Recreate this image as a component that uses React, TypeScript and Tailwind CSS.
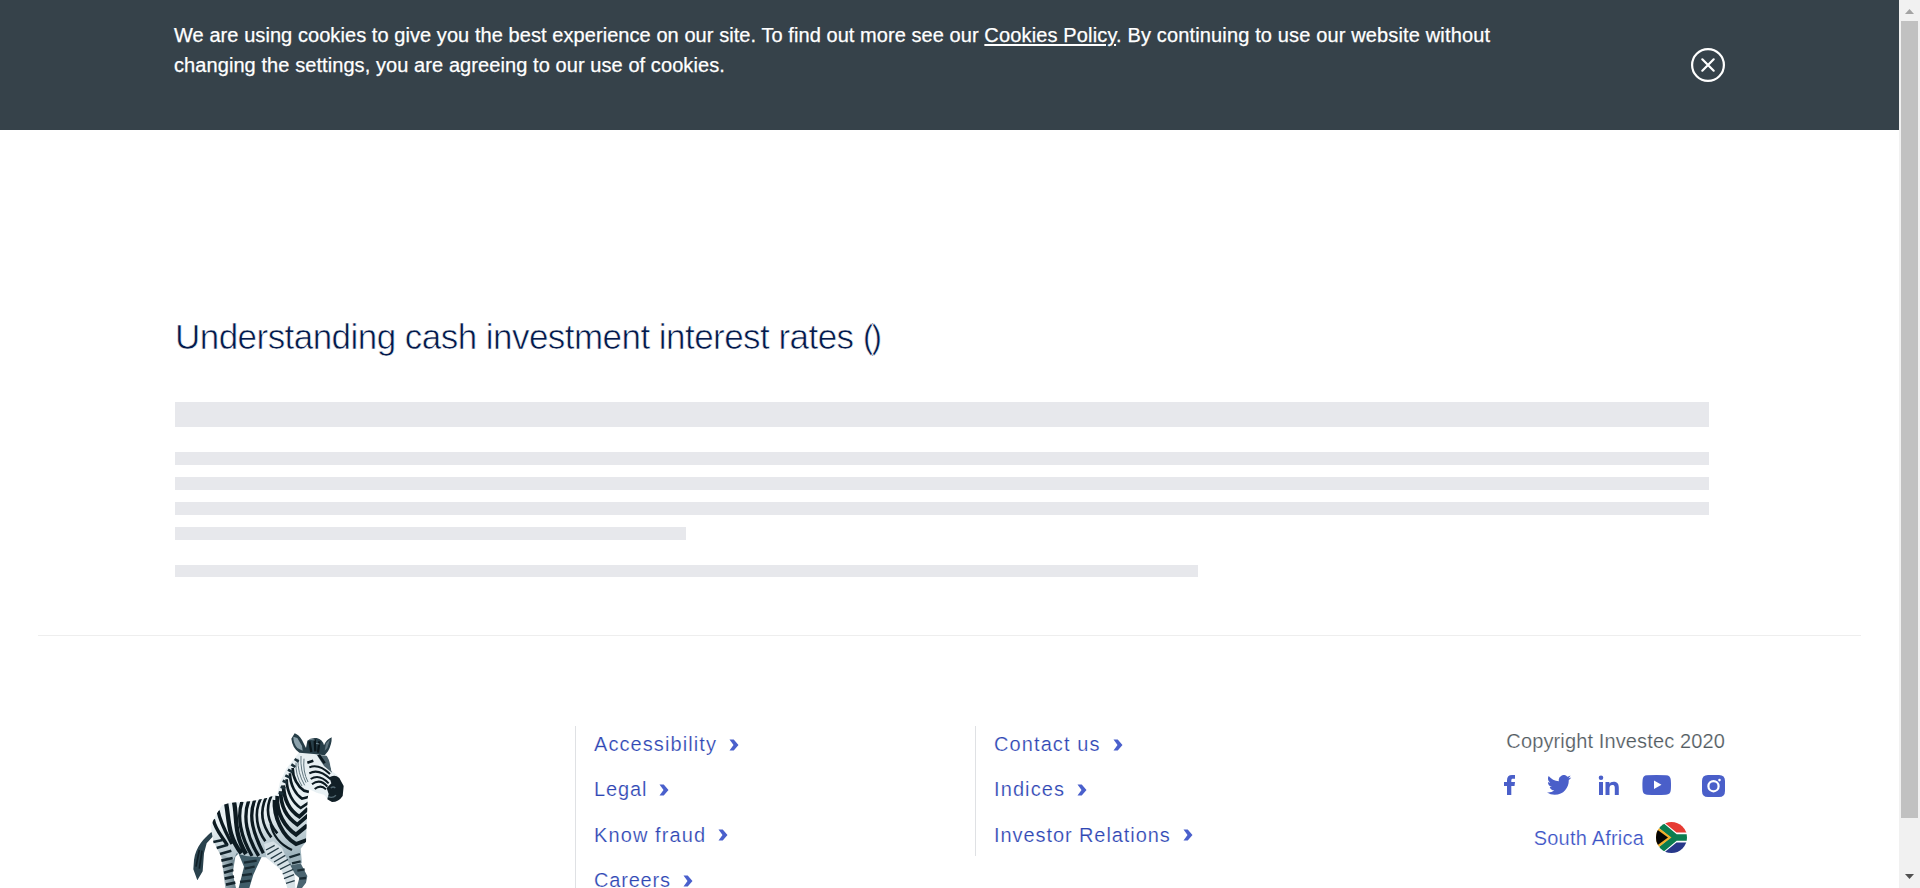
import React from "react";

function Chevron() {
  return (
    <svg className="ml-3 mt-px block h-3 w-[10px] shrink-0" viewBox="0 0 10 12" fill="#4a60cc">
      <path d="M.5.500h4.200L9.500 6 4.700 11.500H.5L4.500 6z" />
    </svg>
  );
}

function FooterLink({ label, spacing }: { label: string; spacing: string }) {
  return (
    <li className="flex h-[45.4px] items-start">
      <a className="flex items-center leading-[30px]">
        <span className={spacing}>{label}</span>
        <Chevron />
      </a>
    </li>
  );
}

const torso =
  "M385 100L408 93 465 98 480 125 484 152 502 166 520 196 519 226 500 244 478 243 462 224 440 218 418 208 413 235 411 290 408 365 392 386 396 430 340 440 288 412 262 411 228 408 200 400 190 420 150 400 128 345 122 318 136 288 156 256 180 248 240 244 290 234 322 223 330 185 350 145z";

function Zebra() {
  return (
    <svg className="block h-[168px] w-[200px]" viewBox="0 0 600 504">
      <defs>
        <linearGradient id="coat" x1="0" y1="0" x2="0.3" y2="1">
          <stop offset="0" stopColor="#e6eef1" />
          <stop offset="0.6" stopColor="#e9f1f4" />
          <stop offset="1" stopColor="#9fb4bd" />
        </linearGradient>
        <linearGradient id="leg" x1="0" y1="0" x2="1" y2="0">
          <stop offset="0" stopColor="#e2ebee" />
          <stop offset="1" stopColor="#4c6874" />
        </linearGradient>
        <clipPath id="body">
          <path d={torso} />
        </clipPath>
      </defs>
      <path d="M124 336C102 356 78 378 72 420L70 448 82 481 98 454 102 400 110 370 132 346z" fill="#2a424d" />
      <path d="M88 390L78 440M96 392L88 446" stroke="#0f1f27" strokeWidth="5" />
      <path d="M206 402L222 440 206 504H238L250 464 276 408z" fill="#405c68" />
      <path d="M340 400L390 380 392 430 412 468 408 488 396 504H380L388 474 350 440z" fill="#4b6571" />
      <path d="M124 330L130 364 154 410 166 504H198L188 460 196 410 210 396 180 340z" fill="url(#leg)" />
      <path d={torso} fill="url(#coat)" />
      <path d="M282 372L290 414 336 452 352 504H376L374 460 352 420 336 384 310 364z" fill="#d6e1e6" />
      <g clipPath="url(#body)" fill="none" stroke="#0c1a21">
        <path d="M168 248C178 300 172 346 214 400M192 246C202 290 190 340 228 402" strokeWidth="13" />
        <path d="M216 244C200 290 212 350 246 408M236 242C218 290 230 350 266 408M254 240C234 290 250 340 280 400" strokeWidth="10" />
        <path d="M272 236C250 280 262 330 286 364M288 232C268 276 276 316 304 352M304 228C286 264 292 306 322 340" strokeWidth="8" />
        <path d="M144 272C152 312 168 338 186 372M130 298C136 330 156 348 172 376" strokeWidth="10" />
        <path d="M314 240C310 290 338 350 378 372L410 360M322 228C318 280 346 322 378 344L412 316" strokeWidth="12" />
        <path d="M332 214C332 260 352 294 382 314L414 286M340 196C342 240 360 272 388 290L414 266" strokeWidth="11" />
        <path d="M350 178C350 218 370 250 392 264L416 248M360 160C360 196 378 224 396 236L418 230M368 144C368 174 384 200 402 212L418 216" strokeWidth="8" />
        <path d="M302 312C308 344 330 374 366 390" strokeWidth="7" />
        <path d="M384 116Q382 158 404 196M393 108Q390 152 408 188M402 116Q398 155 414 186M378 128Q376 166 396 198" strokeWidth="3" stroke="#60767f" />
        <path d="M440 104L474 108 486 158 462 138z" fill="#4b616b" stroke="none" />
        <path d="M418 142Q446 130 480 162M418 160Q446 144 482 178M422 177Q448 160 476 190M426 193Q450 174 472 200M434 207Q452 192 468 208" strokeWidth="6" />
        <path d="M412 128L430 122M446 104L464 130" strokeWidth="8" />
      </g>
      <path d="M326 218l14 4M332 200l14 5M338 182l14 6M346 166l14 7M354 149l14 8M364 133l12 8M374 117l12 8" stroke="#1a2e37" strokeWidth="8" />
      <path d="M388 98Q367 84 364 56L374 40Q386 44 396 60L408 84 412 62Q422 52 440 54 458 58 462 76 468 60 485 52 486 72 474 94L464 106 432 102z" fill="#273e48" />
      <path d="M370 50L382 54 396 78 398 92 382 84Q370 70 370 50z" fill="#8ca2ac" />
      <path d="M480 58L472 84 464 92 468 70z" fill="#60757f" />
      <path d="M418 64l6 32M434 58l2 36M448 64l-4 34" stroke="#0a151a" strokeWidth="7" />
      <path d="M420 58l14 2M438 70l10 2" stroke="#6f8690" strokeWidth="3" />
      <path d="M478 172Q494 162 508 174L521 198 518 228Q506 246 486 246L472 238 476 222 470 204 484 190z" fill="#111f26" />
      <path d="M474 230q14 6 24-4M482 204q8-6 14 0" stroke="#526872" strokeWidth="4" fill="none" />
      <path d="M130 366l28-6M140 384l34-10M150 402l34-10M154 422l34-8M158 440l30-8M162 458l28-8M164 476l28-6M168 494l28-6" stroke="#13242c" strokeWidth="8" />
      <path d="M288 390l26-14M292 404l34-20M302 416l34-20M312 426l34-20M322 436l32-18M330 448l32-16M338 462l32-14M342 476l30-12M348 490l26-8" stroke="#253b45" strokeWidth="4" />
      <path d="M222 428l38-6M224 446l30-6M216 466l30-4M210 486l32-4M358 412l32-10M366 430l26-6M382 452l22-4M388 476l20-2" stroke="#182a32" strokeWidth="7" />
    </svg>
  );
}

function Flag() {
  return (
    <svg className="block size-[31px]" viewBox="0 0 31 31">
      <defs>
        <clipPath id="disc">
          <circle cx="15.5" cy="15.5" r="15.5" />
        </clipPath>
      </defs>
      <g clipPath="url(#disc)">
        <path d="M0 0h31v31H0z" fill="#fff" />
        <path d="M8 0h23v10.500H20.500L10 2z" fill="#e63b33" />
        <path d="M8 31h23V20.500H20.500L10 29z" fill="#27388a" />
        <path d="M1 0L19.500 15.500H31M1 31L19.500 15.500" stroke="#0b7d50" strokeWidth="6.500" fill="none" />
        <path d="M-1 3L15.500 15.500-1 28z" fill="#f2ae2c" />
        <path d="M-1 6L12 15.500-1 25z" fill="#050505" />
      </g>
    </svg>
  );
}

function Bar({ className }: { className: string }) {
  return <div className={"bg-[#e7e8ec] " + className} />;
}

export default function App() {
  return (
    <div className="flex h-[888px] w-full overflow-hidden bg-white font-['Liberation_Sans',Arial,sans-serif]">
      <div className="flex min-w-0 flex-1 flex-col overflow-hidden">
        <header className="flex h-[130px] shrink-0 justify-between bg-[#36424a] px-[174px] text-white">
          <p className="whitespace-nowrap pt-[20px] text-[20px] leading-[30px] [-webkit-text-stroke:0.25px_white]">
            <span className="tracking-[0.068px]">
              We are using cookies to give you the best experience on our site. To find out more see our{" "}
            </span>
            <span className="tracking-[0.145px]">
              <a className="underline decoration-2 underline-offset-2">Cookies Policy</a>. By continuing to use our
              website without
            </span>
            <br />
            <span className="tracking-[0.08px]">
              changing the settings, you are agreeing to our use of cookies.
            </span>
          </p>
          <button className="mt-12 size-[34px]" aria-label="Close">
            <svg viewBox="0 0 34 34" fill="none" stroke="#fff" strokeWidth="2.2" strokeLinecap="round">
              <circle cx="17" cy="17" r="15.9" />
              <path d="M11.3 11.3l11.4 11.4M22.7 11.3L11.3 22.7" />
            </svg>
          </button>
        </header>

        <main className="flex h-[505px] shrink-0 flex-col pl-[175px] pt-[182px]">
          <h1 className="mb-[40px] h-[50px] whitespace-nowrap text-[35px] leading-[49px] tracking-[-0.54px] text-[#03194b] [-webkit-text-stroke:0.6px_white]">
            Understanding cash investment interest rates <span className="tracking-[-4px]">()</span>
          </h1>
          <Bar className="h-[25px] w-[1534px]" />
          <Bar className="mt-[25px] h-[13px] w-[1534px]" />
          <Bar className="mt-[12px] h-[13px] w-[1534px]" />
          <Bar className="mt-[12px] h-[13px] w-[1534px]" />
          <Bar className="mt-[12px] h-[13px] w-[511px]" />
          <Bar className="mt-[25px] h-[12px] w-[1023px]" />
        </main>

        <footer className="mx-[38px] flex h-[253px] shrink-0 overflow-hidden border-t border-[#eeeeee] text-[20px] text-[#2f47b4]">
          <div className="w-[537px] shrink-0 pl-[132px] pt-[84px]">
            <Zebra />
          </div>
          <ul className="mt-[90px] w-[400px] shrink-0 border-l border-[#dfe1e4] pl-[18px] pt-[3px] [-webkit-text-stroke:0.2px_white]">
            <FooterLink label="Accessibility" spacing="tracking-[1.08px]" />
            <FooterLink label="Legal" spacing="tracking-[0.9px]" />
            <FooterLink label="Know fraud" spacing="tracking-[1.1px]" />
            <FooterLink label="Careers" spacing="tracking-[0.8px]" />
          </ul>
          <ul className="mt-[90px] h-[130px] w-[400px] shrink-0 border-l border-[#dfe1e4] pl-[18px] pt-[3px] [-webkit-text-stroke:0.2px_white]">
            <FooterLink label="Contact us" spacing="tracking-[1.1px]" />
            <FooterLink label="Indices" spacing="tracking-[1.1px]" />
            <FooterLink label="Investor Relations" spacing="tracking-[0.92px]" />
          </ul>
          <div className="flex min-w-0 flex-1 flex-col items-end pr-[136px] pt-[90px]">
            <p className="whitespace-nowrap leading-[30px] tracking-[0.13px] text-[#535c62] [-webkit-text-stroke:0.2px_white]">
              Copyright Investec 2020
            </p>
            <svg className="mt-[19px] block h-[22px] w-[222px]" viewBox="0 0 222 22" fill="#4a5fc9">
              <path d="M4 20V11H1V7h3V5.200C4 1.800 5.800 0 9 0h3v3.800H10C8.700 3.800 8.300 4.400 8.300 5.500V7H12l-.5 4H8.300v9z" />
              <path
                transform="translate(44 -2.200) scale(1.010)"
                d="M23.950 4.570a10 10 0 0 1-2.820.78 4.960 4.960 0 0 0 2.160-2.730c-.95.560-2 .960-3.130 1.190a4.920 4.920 0 0 0-8.380 4.480C7.690 8.100 4.070 6.130 1.640 3.160a4.820 4.820 0 0 0-.67 2.480c0 1.710.87 3.210 2.190 4.100a4.900 4.900 0 0 1-2.230-.62v.06a4.920 4.920 0 0 0 3.950 4.830 5 5 0 0 1-2.210.08 4.940 4.940 0 0 0 4.600 3.420A9.870 9.870 0 0 1 0 19.540a14 14 0 0 0 7.550 2.210c9.050 0 14-7.500 14-13.990 0-.21 0-.42-.02-.63a9.940 9.940 0 0 0 2.460-2.550z"
              />
              <path d="M96 7h4v13h-4zM98 0.500a2.300 2.300 0 1 1 0 4.600 2.300 2.300 0 0 1 0-4.600zM102.500 7h3.900v1.800C107.100 7.500 108.500 6.700 110.500 6.700c4.200 0 5.300 2.600 5.300 6V20h-4v-6.500c0-1.600 0-3.500-2.400-3.500S106.500 11.800 106.500 13.500V20h-4z" />
              <path
                fillRule="evenodd"
                d="M144 .3Q153.500-.2 163 .3 167.500.5 167.800 5 168.200 10 167.800 15 167.500 19.500 163 19.700 153.500 20.200 144 19.700 139.900 19.500 139.600 15 139.200 10 139.600 5 139.900.5 144 .3zM151 5.500v8.500l7.500-4.200z"
              />
              <path
                fillRule="evenodd"
                d="M205 0h11q6 0 6 6v10q0 6-6 6h-11q-6 0-6-6V6q0-6 6-6zM210.500 5a6.200 6.200 0 1 0 0 12.400 6.200 6.200 0 0 0 0-12.400zm0 2.200a4 4 0 1 1 0 8 4 4 0 0 1 0-8zM216.500 3.800a1.300 1.300 0 1 0 0 2.600 1.300 1.300 0 0 0 0-2.600z"
              />
            </svg>
            <div className="mr-[38px] mt-[25px] flex items-center gap-3 text-[#3c53c6]">
              <span className="leading-[30px] tracking-[0.2px] [-webkit-text-stroke:0.2px_white]">South Africa</span>
              <Flag />
            </div>
          </div>
        </footer>
      </div>

      <div className="flex w-[21px] shrink-0 flex-col items-center bg-[#f1f1f1]">
        <svg className="block h-[21px] w-[17px] shrink-0" viewBox="0 0 17 21">
          <path d="M4 14h9L8.500 9z" fill="#a3a3a3" />
        </svg>
        <div className="h-[797px] w-[17px] shrink-0 bg-[#c1c1c1]" />
        <svg className="mt-auto block h-[21px] w-[17px] shrink-0" viewBox="0 0 17 21">
          <path d="M4 7h9l-4.500 5z" fill="#505050" />
        </svg>
      </div>
    </div>
  );
}
